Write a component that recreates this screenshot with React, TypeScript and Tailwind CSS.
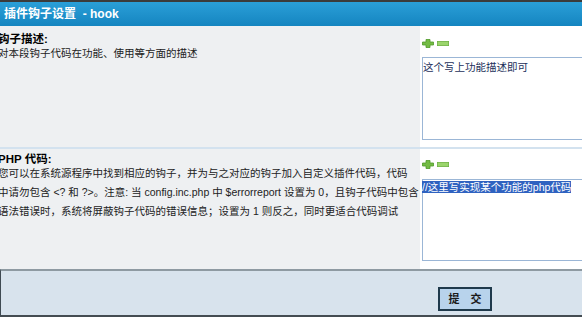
import React from 'react';

const FONT = { fontFamily: 'Arial, "Liberation Sans", "Noto Sans CJK SC", sans-serif' };

function PlusMinus() {
  return (
    <div className="flex items-center gap-[3px]">
      <svg width="12" height="9" viewBox="0 0 12 9">
        <path d="M4 0.5h4v2.5h3.5v3h-3.5v2.5h-4v-2.5h-3.5v-3h3.5z" fill="#74bb45" stroke="#4f9a2a" strokeWidth="0.8" />
      </svg>
      <svg width="12" height="5" viewBox="0 0 12 5">
        <rect x="0.4" y="0.4" width="11.2" height="4.2" fill="#9ad46c" stroke="#6cb040" strokeWidth="0.8" />
      </svg>
    </div>
  );
}

export default function App() {
  return (
    <div className="w-[582px] h-[317px] overflow-hidden flex flex-col bg-white" style={FONT}>
      {/* header */}
      <div className="h-[26px] shrink-0 border-t-2 border-[#3b3b3b] bg-gradient-to-b from-[#2a9fd8] to-[#1485c0] flex items-center pl-[4px] pr-[5px]">
        <span className="text-white font-bold text-[12px] leading-none">插件钩子设置&nbsp; - hook</span>
      </div>

      {/* hook description */}
      <div className="h-[121px] shrink-0 flex">
        <div className="w-[420px] shrink-0 overflow-hidden bg-[#eef0f2] pt-[6px]">
          <p className="font-bold text-[11.5px] leading-[14px] text-black ml-[-2px]">钩子描述:</p>
          <p className="text-[10.5px] leading-[14px] text-[#222] ml-[-2px]">对本段钩子代码在功能、使用等方面的描述</p>
        </div>
        <div className="flex-1 bg-white pl-[2px] pt-[13px] border-r border-[#d0d6dc]">
          <PlusMinus />
          <div className="mt-[9px] h-[83px] w-[170px] border border-[#9bb6d6] bg-white pt-[2px] text-[10.5px] leading-[14px] text-[#1c2f5a]">
            这个写上功能描述即可
          </div>
        </div>
      </div>

      <div className="h-[2px] shrink-0 bg-[#d3e2ef]" />

      {/* php code */}
      <div className="h-[120px] shrink-0 flex">
        <div className="w-[420px] shrink-0 overflow-hidden bg-[#eef0f2] pt-[4px]">
          <p className="font-bold text-[11.5px] leading-[12px] text-black ml-[-2px]">PHP 代码:</p>
          <div className="mt-[-1px] ml-[-2px] text-[10.5px] leading-[19px] text-[#222] whitespace-nowrap">
            <p>您可以在系统源程序中找到相应的钩子，并为与之对应的钩子加入自定义插件代码，代码</p>
            <p>中请勿包含 &lt;? 和 ?&gt;。注意: 当 config.inc.php 中 $errorreport 设置为 0，且钩子代码中包含</p>
            <p>语法错误时，系统将屏蔽钩子代码的错误信息；设置为 1 则反之，同时更适合代码调试</p>
          </div>
        </div>
        <div className="flex-1 bg-white pl-[2px] pt-[11px] border-r border-[#d0d6dc]">
          <PlusMinus />
          <div className="mt-[10px] h-[82px] w-[170px] border border-[#9bb6d6] bg-white pt-[1px] text-[10.5px] leading-[13px]">
            <span className="bg-[#2f62c0] text-white ml-[-1px]">//这里写实现某个功能的php代码</span>
          </div>
        </div>
      </div>

      {/* footer */}
      <div className="flex-1 border-t-2 border-[#8e9aa2] border-l border-l-[#3f4a52] border-b-2 border-b-[#444c52] bg-[#d8e3ed] flex justify-end items-start pr-[90px] pt-[16px]">
        <button className="w-[54px] h-[24px] border-2 border-[#1f3a4c] bg-[#b8d3ec] text-[11px] font-bold text-[#1a1a1a] tracking-[4px] pl-[4px]">
          提 交
        </button>
      </div>
    </div>
  );
}
